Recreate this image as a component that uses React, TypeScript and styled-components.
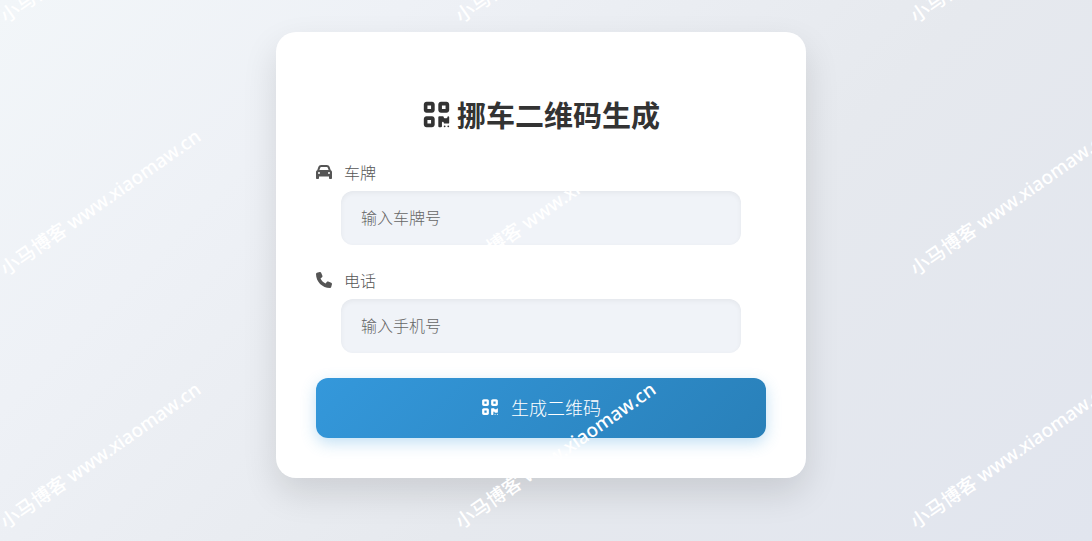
import React, { useState } from "react";
import styled, { createGlobalStyle } from "styled-components";
import { FaCar, FaPhone, FaQrcode } from "react-icons/fa6";

const GlobalStyle = createGlobalStyle`
  *, *::before, *::after { box-sizing: border-box; }
  body {
    margin: 0;
    font-family: "Noto Sans CJK SC", "Noto Sans", sans-serif;
  }
  input, button { font-family: inherit; }
`;

const Page = styled.main`
  position: relative;
  display: flex;
  justify-content: center;
  align-items: flex-start;
  min-height: 100vh;
  padding: 32px 10px 32px 0;
  overflow: hidden;
  background: linear-gradient(135deg, #f2f6f9 0%, #eef1f6 25%, #e6e9ee 60%, #e1e5ee 100%);
`;

const Card = styled.form`
  width: 100%;
  max-width: 530px;
  padding: 62px 40px 40px;
  border-radius: 20px;
  background: #fff;
  box-shadow: 0 15px 35px rgba(0, 0, 0, 0.12);
`;

const Title = styled.h1`
  display: flex;
  align-items: center;
  justify-content: center;
  gap: 6px;
  margin: 0 0 28px;
  font-size: 29px;
  line-height: 40px;
  font-weight: 700;
  color: #333;
`;

const Field = styled.div`
  margin-bottom: 25px;
`;

const Label = styled.label`
  display: flex;
  align-items: center;
  gap: 12px;
  padding-bottom: 9px;
  font-size: 16px;
  line-height: 20px;
  font-weight: 300;
  color: #555;
`;

const InputWrap = styled.div`
  padding: 0 25px;
`;

const Input = styled.input`
  display: block;
  width: 100%;
  height: 54px;
  padding: 0 20px 2px;
  border: 0;
  border-radius: 12px;
  background: #f0f3f8;
  box-shadow: inset 0 2px 5px rgba(0, 0, 0, 0.05);
  font-size: 16px;
  font-weight: 300;
  color: #333;
  &::placeholder { color: #666; opacity: 1; }
`;

const SubmitButton = styled.button`
  display: flex;
  align-items: center;
  justify-content: center;
  gap: 12px;
  width: 100%;
  height: 60px;
  padding: 0 0 2px;
  border: 0;
  border-radius: 12px;
  background: linear-gradient(135deg, #3498db, #2980b9);
  box-shadow: 0 5px 15px rgba(52, 152, 219, 0.3);
  font-size: 18px;
  font-weight: 300;
  color: #fff;
  cursor: pointer;
`;

const COLUMNS = 3;
const ROWS = 3;

const Watermarks = styled.div`
  position: absolute;
  inset: -225px 0 0 2px;
  display: grid;
  grid-template-columns: repeat(${COLUMNS}, 455px);
  grid-auto-rows: 253px;
  pointer-events: none;
`;

const Watermark = styled.div`
  display: flex;
  align-items: flex-end;
  font-size: 19px;
  line-height: 20px;
  font-weight: 500;
  white-space: nowrap;
  color: #fff;
`;

const WatermarkText = styled.span`
  transform: rotate(-35deg);
  transform-origin: left center;
`;

const Site = styled.span`
  font-family: "Noto Sans", sans-serif;
`;

export default function App() {
  const [plate, setPlate] = useState("");
  const [phone, setPhone] = useState("");

  return (
    <>
      <GlobalStyle />
      <Page>
        <Card onSubmit={(e: React.FormEvent) => e.preventDefault()}>
          <Title>
            <FaQrcode aria-hidden="true" />
            挪车二维码生成
          </Title>
          <Field>
            <Label htmlFor="plate">
              <FaCar aria-hidden="true" />
              车牌
            </Label>
            <InputWrap>
              <Input
                id="plate"
                placeholder="输入车牌号"
                value={plate}
                onChange={(e) => setPlate(e.target.value)}
              />
            </InputWrap>
          </Field>
          <Field>
            <Label htmlFor="phone">
              <FaPhone aria-hidden="true" />
              电话
            </Label>
            <InputWrap>
              <Input
                id="phone"
                type="tel"
                placeholder="输入手机号"
                value={phone}
                onChange={(e) => setPhone(e.target.value)}
              />
            </InputWrap>
          </Field>
          <SubmitButton type="submit">
            <FaQrcode aria-hidden="true" />
            生成二维码
          </SubmitButton>
        </Card>
        <Watermarks aria-hidden="true">
          {Array.from({ length: COLUMNS * ROWS }, (_, i) => (
            <Watermark key={i}>
              <WatermarkText>
                小马博客<Site> www.xiaomaw.cn</Site>
              </WatermarkText>
            </Watermark>
          ))}
        </Watermarks>
      </Page>
    </>
  );
}
